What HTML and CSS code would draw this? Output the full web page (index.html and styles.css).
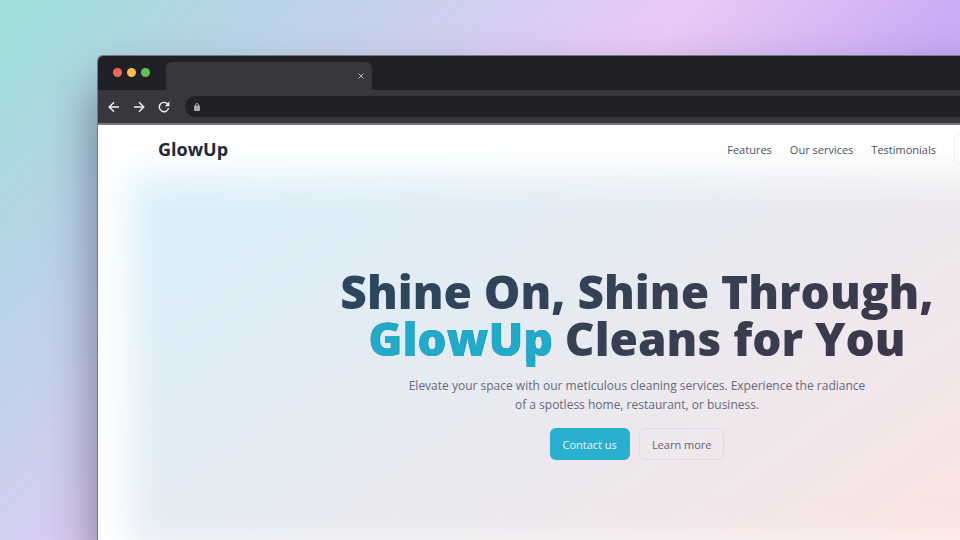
FILE: index.html
```html
<!DOCTYPE html>
<html lang="en">
<head>
<meta charset="utf-8">
<title>GlowUp</title>
<link rel="stylesheet" href="styles.css">
</head>
<body>
<div class="stage">
  <div class="window">
    <div class="tabs">
      <div class="lights"><span class="light red"></span><span class="light amber"></span><span class="light green"></span></div>
      <div class="tab">
        <button class="icon close" aria-label="Close tab"><svg width="6" height="6" viewBox="0 0 6 6"><path d="M.5 .5l5 5M5.500 .5l-5 5"/></svg></button>
      </div>
    </div>
    <div class="toolbar">
      <button class="icon" aria-label="Back"><svg width="12" height="12" viewBox="0 0 12 12"><path d="M11 6H1.500M6 1.200L1.200 6L6 10.800"/></svg></button>
      <button class="icon" aria-label="Forward"><svg width="12" height="12" viewBox="0 0 12 12"><path d="M1 6h9.500M6 1.200L10.800 6L6 10.800"/></svg></button>
      <button class="icon" aria-label="Reload"><svg width="12" height="12" viewBox="0 0 12 12"><path d="M9.800 3.200A4.700 4.700 0 1 0 10.600 7.200"/><path class="solid" d="M11.400 .6v4.700H6.700z"/></svg></button>
      <div class="address">
        <svg width="6" height="8" viewBox="0 0 6 8"><rect class="lock" y="2.500" width="6" height="5.500" rx=".7"/><path class="shackle" d="M1.500 3V2a1.500 1.500 0 0 1 3 0v1"/></svg>
      </div>
    </div>
    <div class="page">
      <header class="header">
        <a class="brand" href="#">GlowUp</a>
        <nav class="nav">
          <a href="#">Features</a>
          <a href="#">Our services</a>
          <a href="#">Testimonials</a>
          <button class="button outline action" aria-label="Menu"></button>
        </nav>
      </header>
      <main class="hero">
        <h1 class="title">Shine On, Shine Through,<br><span class="accent">GlowUp</span> Cleans for You</h1>
        <p class="lead">Elevate your space with our meticulous cleaning services. Experience the radiance of a spotless home, restaurant, or business.</p>
        <div class="actions">
          <button class="button primary">Contact us</button>
          <button class="button outline">Learn more</button>
        </div>
      </main>
    </div>
  </div>
</div>
</body>
</html>
```
FILE: styles.css
```css
* { box-sizing: border-box; }

body {
  margin: 0;
  font-family: "Open Sans", "Noto Sans", sans-serif;
}

.stage {
  display: flex;
  min-height: 100vh;
  padding: 55px 0 0 97px;
  overflow: hidden;
  background:
    linear-gradient(132deg, #9de1da 0%, #a9dbe0 8%, #b5d5e5 16%, #c6d2ed 27%, #eac9f5 48%, #c7abf5 68%, #c7abf5 100%);
}

.window {
  display: flex;
  flex: 1;
  flex-direction: column;
  margin-right: -216px;
  border: 1px solid #77797b;
  border-width: 1px 0 0 1px;
  border-radius: 6px 6px 0 0;
  overflow: hidden;
  background: #fff;
  box-shadow: 0 30px 50px rgba(40, 35, 65, 0.55);
}

.tabs {
  display: flex;
  align-items: flex-end;
  gap: 16px;
  height: 34px;
  padding-left: 15px;
  background: #202124;
}

.lights { display: flex; gap: 5px; padding-bottom: 13px; }
.light { width: 9px; height: 9px; border-radius: 50%; }
.red { background: #f2645f; }
.amber { background: #f5bd4f; }
.green { background: #61c554; }

.tab {
  display: flex;
  align-items: center;
  justify-content: flex-end;
  width: 206px;
  height: 28px;
  padding-right: 8px;
  border-radius: 6px 6px 0 0;
  background: #37383c;
}

.icon {
  display: flex;
  padding: 0;
  border: 0;
  background: none;
  color: #f1f1f2;
}

.icon path { fill: none; stroke: currentColor; stroke-width: 1.4; }
.icon .solid { fill: currentColor; stroke: none; }
.close { color: #b4b5b7; }
.close path { stroke-width: 1; }

.toolbar {
  display: flex;
  align-items: center;
  gap: 13px;
  height: 35px;
  padding-left: 10px;
  border-bottom: 2px solid #77787b;
  background: #37383c;
}

.address {
  display: flex;
  flex: 1;
  align-items: center;
  height: 21px;
  margin-left: 2px;
  padding-left: 9px;
  border-radius: 11px;
  background: #202124;
}

.lock { fill: #a7a8aa; }
.shackle { fill: none; stroke: #a7a8aa; }

.page { position: relative; flex: 1; isolation: isolate; }

.page::before {
  content: "";
  position: absolute;
  z-index: -1;
  inset: 51px 32px -10px;
  background: linear-gradient(145deg, #d7f0fc 0%, #e8eaf0 45%, #f1e7eb 65%, #fce4e1 88%);
  filter: blur(19px);
}

.header {
  display: flex;
  align-items: center;
  justify-content: space-between;
  height: 48px;
  padding: 0 60px;
}

.brand {
  color: #1f2937;
  font-size: 18px;
  font-weight: 700;
  text-decoration: none;
}

.nav { display: flex; align-items: center; gap: 18px; font-size: 11px; }
.nav a { color: #4b5563; text-decoration: none; }

.hero {
  display: flex;
  flex-direction: column;
  align-items: center;
  padding-top: 95px;
  text-align: center;
}

.title {
  margin: 0;
  background: linear-gradient(150deg, #2c465d 10%, #374053 50%, #3c384b 90%);
  background-clip: text;
  color: transparent;
  font-size: 46px;
  font-weight: 800;
  line-height: 47px;
}

.accent { color: #20abca; }

.lead {
  max-width: 464px;
  margin: 14px 0;
  color: #666a7b;
  font-size: 12px;
  line-height: 19px;
}

.actions { display: flex; gap: 9px; }

.button {
  height: 32px;
  padding: 0 12px;
  border: 1px solid transparent;
  border-radius: 6px;
  font-family: inherit;
  font-size: 11px;
}

.primary { background: #28b0ce; color: #e8f7fb; }
.outline { border-color: #dfdce2; background: transparent; color: #626470; }
.action { width: 162px; border-color: #eceef0; }
```
